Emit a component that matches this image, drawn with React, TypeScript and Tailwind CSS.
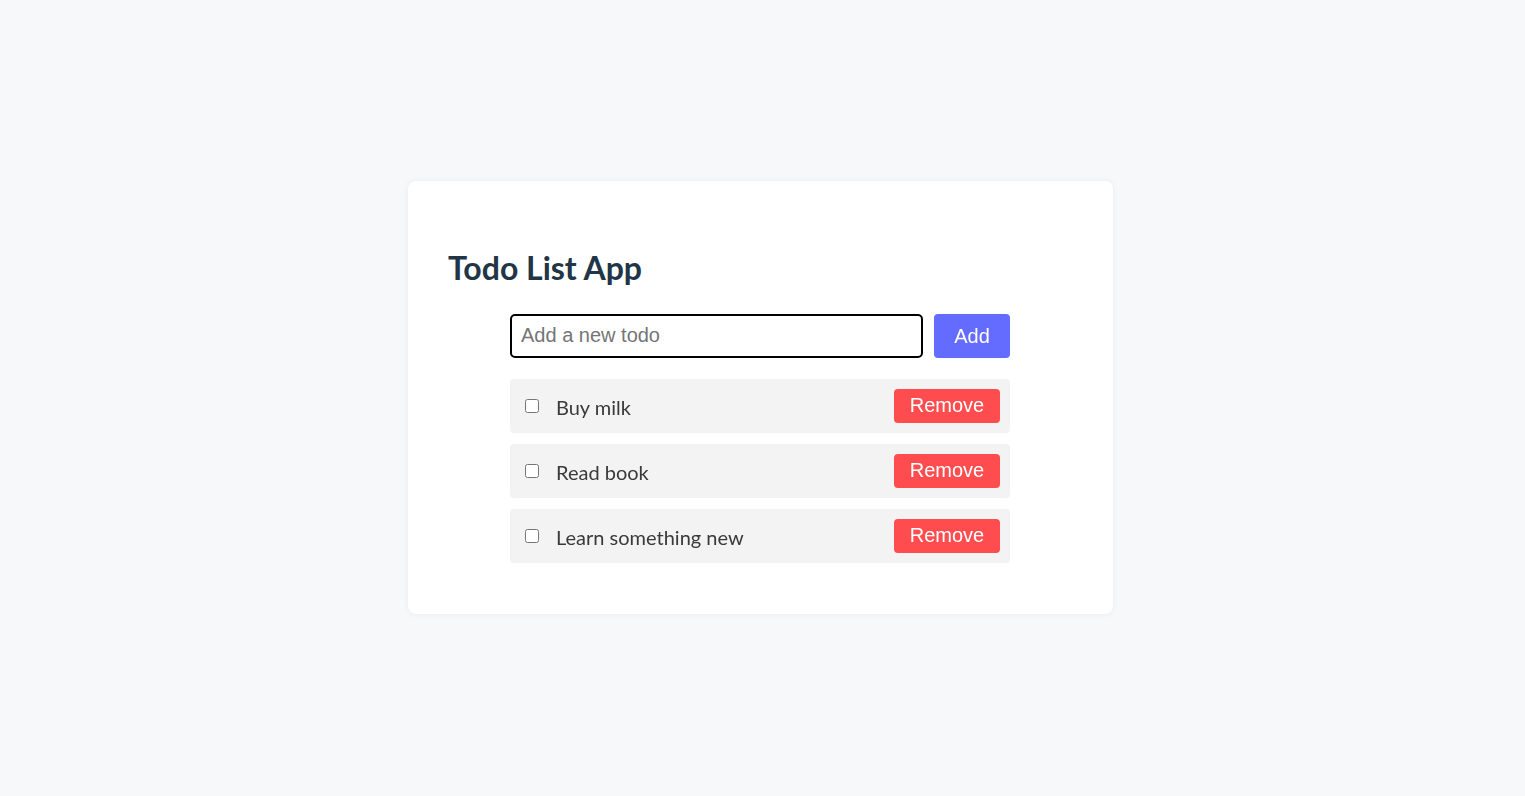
import { useState } from "react"

type Todo = { id: number; text: string; done: boolean }

const initial: Todo[] = [
    { id: 1, text: "Buy milk", done: false },
    { id: 2, text: "Read book", done: false },
    { id: 3, text: "Learn something new", done: false },
]

const App = () => {
    const [todos, setTodos] = useState<Todo[]>(initial)
    const [value, setValue] = useState("")

    const add = () => {
        if (!value.trim()) return
        setTodos([...todos, { id: Date.now(), text: value, done: false }])
        setValue("")
    }

    return (
        <div className="min-h-screen bg-[#f7f8fa] flex items-center justify-center font-['Lato',sans-serif]">
            <div className="w-[705px] mr-[4px] mb-[2px] bg-white rounded-lg shadow-[0_0_6px_rgba(0,0,0,0.06)] px-10 pt-[68px] pb-[51px]">
                <h1 className="text-[32px] leading-[38px] font-bold text-[#213547]">Todo List App</h1>
                <div className="w-[500px] ml-[62px] mt-[27px]">
                    <div className="flex gap-[11px]">
                        <input
                            autoFocus
                            value={value}
                            onChange={(e) => setValue(e.target.value)}
                            placeholder="Add a new todo"
                            className="flex-1 h-[44px] border-2 border-black rounded-[5px] px-[9px] text-[20px] font-['Liberation_Sans',Arial,sans-serif] text-[#213547] placeholder:text-[#757575] outline-none"
                        />
                        <button
                            onClick={add}
                            className="w-[76px] h-[44px] rounded-[4px] bg-[#646cff] text-white text-[20px] font-['Liberation_Sans',Arial,sans-serif]"
                        >
                            Add
                        </button>
                    </div>
                    <ul className="mt-[21px] flex flex-col gap-[11px]">
                        {todos.map((t) => (
                            <li key={t.id} className="h-[54px] bg-[#f3f3f3] rounded-[4px] flex items-center pl-[15px] pr-[10px]">
                                <input
                                    type="checkbox"
                                    checked={t.done}
                                    onChange={() => setTodos(todos.map((x) => x.id === t.id ? { ...x, done: !x.done } : x))}
                                    className="w-[14px] h-[14px] m-0"
                                />
                                <span className={`ml-[17px] text-[20px] text-[#3a3a3a] mt-[2px] ${t.done ? "line-through" : ""}`}>{t.text}</span>
                                <button
                                    onClick={() => setTodos(todos.filter((x) => x.id !== t.id))}
                                    className="ml-auto w-[106px] h-[34px] rounded-[4px] bg-[#ff4d4f] text-white text-[20px] leading-[32px] pb-[1px] font-['Liberation_Sans',Arial,sans-serif]"
                                >
                                    Remove
                                </button>
                            </li>
                        ))}
                    </ul>
                </div>
            </div>
        </div>
    )
}

export default App
